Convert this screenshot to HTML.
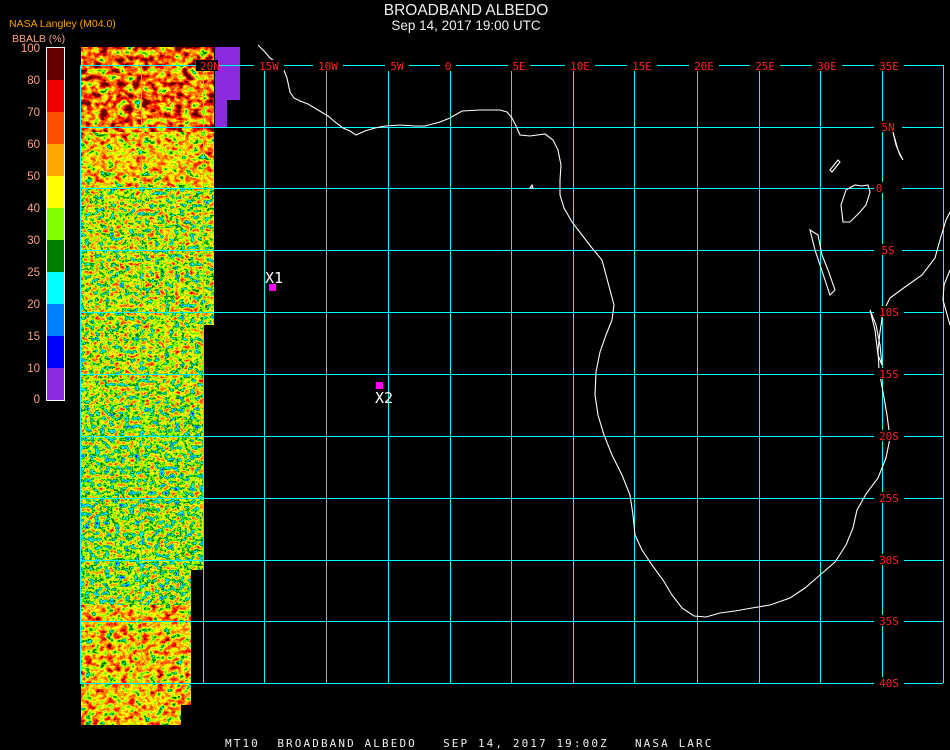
<!DOCTYPE html>
<html><head><meta charset="utf-8"><style>
html,body{margin:0;padding:0;background:#000;width:950px;height:750px;overflow:hidden}
svg{display:block}
.s{font-family:"Liberation Sans",sans-serif}
.m{font-family:"DejaVu Sans Mono","Liberation Mono",monospace}
.l{fill:#ff2020;font-size:11px;font-family:"DejaVu Sans Mono","Liberation Mono",monospace}
</style></head><body>
<svg width="950" height="750" viewBox="0 0 950 750" xmlns="http://www.w3.org/2000/svg" shape-rendering="crispEdges">
<defs>
<filter id="n1" x="0" y="0" width="1" height="1" color-interpolation-filters="sRGB">
<feTurbulence type="fractalNoise" baseFrequency="0.12 0.16" numOctaves="3" seed="3"/>
<feColorMatrix type="matrix" values="1.1 0 0 0 0.19  1.1 0 0 0 0.19  1.1 0 0 0 0.19  0 0 0 0 1"/>
<feComponentTransfer>
<feFuncR type="discrete" tableValues="0.55 0 0 0 0 0.5 1 1 1 1 0.4"/>
<feFuncG type="discrete" tableValues="0.16 0 0.5 1 0.5 1 1 0.65 0.33 0 0"/>
<feFuncB type="discrete" tableValues="0.86 1 1 1 0 0 0 0 0 0 0"/>
</feComponentTransfer>
</filter>
<filter id="n2" x="0" y="0" width="1" height="1" color-interpolation-filters="sRGB">
<feTurbulence type="fractalNoise" baseFrequency="0.14 0.18" numOctaves="3" seed="7"/>
<feColorMatrix type="matrix" values="1.0 0 0 0 0.13  1.0 0 0 0 0.13  1.0 0 0 0 0.13  0 0 0 0 1"/>
<feComponentTransfer>
<feFuncR type="discrete" tableValues="0.55 0 0 0 0 0.5 1 1 1 1 0.4"/>
<feFuncG type="discrete" tableValues="0.16 0 0.5 1 0.5 1 1 0.65 0.33 0 0"/>
<feFuncB type="discrete" tableValues="0.86 1 1 1 0 0 0 0 0 0 0"/>
</feComponentTransfer>
</filter>
<filter id="n3" x="0" y="0" width="1" height="1" color-interpolation-filters="sRGB">
<feTurbulence type="fractalNoise" baseFrequency="0.2 0.24" numOctaves="3" seed="11"/>
<feColorMatrix type="matrix" values="1.0 0 0 0 0.04  1.0 0 0 0 0.04  1.0 0 0 0 0.04  0 0 0 0 1"/>
<feComponentTransfer>
<feFuncR type="discrete" tableValues="0.55 0 0 0 0 0.5 1 1 1 1 0.4"/>
<feFuncG type="discrete" tableValues="0.16 0 0.5 1 0.5 1 1 0.65 0.33 0 0"/>
<feFuncB type="discrete" tableValues="0.86 1 1 1 0 0 0 0 0 0 0"/>
</feComponentTransfer>
</filter>
<filter id="n4" x="0" y="0" width="1" height="1" color-interpolation-filters="sRGB">
<feTurbulence type="fractalNoise" baseFrequency="0.2 0.24" numOctaves="3" seed="5"/>
<feColorMatrix type="matrix" values="1.0 0 0 0 0.0  1.0 0 0 0 0.0  1.0 0 0 0 0.0  0 0 0 0 1"/>
<feComponentTransfer>
<feFuncR type="discrete" tableValues="0.55 0 0 0 0 0.5 1 1 1 1 0.4"/>
<feFuncG type="discrete" tableValues="0.16 0 0.5 1 0.5 1 1 0.65 0.33 0 0"/>
<feFuncB type="discrete" tableValues="0.86 1 1 1 0 0 0 0 0 0 0"/>
</feComponentTransfer>
</filter>
<filter id="n5" x="0" y="0" width="1" height="1" color-interpolation-filters="sRGB">
<feTurbulence type="fractalNoise" baseFrequency="0.14 0.18" numOctaves="3" seed="9"/>
<feColorMatrix type="matrix" values="1.0 0 0 0 0.14  1.0 0 0 0 0.14  1.0 0 0 0 0.14  0 0 0 0 1"/>
<feComponentTransfer>
<feFuncR type="discrete" tableValues="0.55 0 0 0 0 0.5 1 1 1 1 0.4"/>
<feFuncG type="discrete" tableValues="0.16 0 0.5 1 0.5 1 1 0.65 0.33 0 0"/>
<feFuncB type="discrete" tableValues="0.86 1 1 1 0 0 0 0 0 0 0"/>
</feComponentTransfer>
</filter>
</defs>
<rect x="81" y="47" width="133" height="85" fill="#000" filter="url(#n1)"/>
<rect x="81" y="132" width="133" height="55" fill="#000" filter="url(#n2)"/>
<rect x="81" y="187" width="133" height="138" fill="#000" filter="url(#n3)"/>
<rect x="81" y="325" width="122" height="80" fill="#000" filter="url(#n3)"/>
<rect x="81" y="405" width="122" height="165" fill="#000" filter="url(#n4)"/>
<rect x="81" y="570" width="110" height="35" fill="#000" filter="url(#n4)"/>
<rect x="81" y="605" width="110" height="100" fill="#000" filter="url(#n5)"/>
<rect x="81" y="705" width="100" height="20" fill="#000" filter="url(#n5)"/>
<!-- purple block -->
<rect x="215" y="47" width="25" height="53" fill="#8a2be2"/>
<rect x="215" y="100" width="12" height="27" fill="#8a2be2"/>

<!-- grid -->
<g stroke="#00ffff" stroke-width="1" fill="none">
<path d="M80 65.5H943M80 127.5H943M80 188.5H943M80 250.5H943M80 312.5H943M80 374.5H943M80 436.5H943M80 498.5H943M80 560.5H943M80 621.5H943M80 683.5H943"/>
<path d="M80.5 65V683M203.5 65V683M264.5 65V683M388.5 65V683M450.5 65V683M573.5 65V683M634.5 65V683M759.5 65V683M820.5 65V683M882.5 65V683M943.5 65V683"/>
</g>
<g stroke="#aaa" stroke-width="1" fill="none">
<path d="M141.5 65V683M326.5 65V683M511.5 65V683M697.5 65V683"/>
</g>

<!-- coast -->
<g stroke="#fff" stroke-width="1.1" fill="none" shape-rendering="auto">
<path d="M258 45L265 52L270 58L277 63L283 68L287 78L290 92L294 98L300 101L308 104L318 110L328 116L335 122L343 128L350 131L356 135L365 131L375 128L385 126L400 125L415 126L425 126L440 122L450 118L462 111L480 110L500 110L507 112L512 118L516 126L520 135L530 136L545 134L553 140L558 150L561 165L560 180L560 195L564 208L572 222L582 235L592 248L602 260L606 275L610 290L614 305L612 320L606 335L600 352L596 372L595 395L598 415L604 435L612 455L622 475L630 495L633 515L635 535L642 550L652 565L663 580L672 595L682 608L694 616L706 617L720 613L735 611L752 608L770 605L790 598L805 588L820 575L835 562L846 545L853 528L857 510L866 494L878 478L886 458L890 438L887 415L883 392L879 370L878 350L880 332L883 312L890 298L905 287L922 275L935 258L940 240L946 220L950 212"/>
<path d="M830 170L838 160L840 162L832 172Z"/>
<path d="M846 190L855 185L862 186L868 185L870 192L866 205L860 212L850 222L843 222L841 205Z"/>
<path d="M810 230L815 250L820 265L825 280L830 295L835 290L828 270L822 255L818 235Z"/>
<path d="M893 132L896 145L900 155L903 160L898 150Z"/>
<path d="M870 310L875 330L878 355L882 365L880 345L876 325Z"/>
<path d="M950 270L944 285L943 300L948 318L950 325"/>
<path d="M532 185L530 188L533 188Z"/>
</g>

<!-- top labels -->
<g fill="#000">
<rect x="196" y="60" width="22" height="11"/>
<rect x="254" y="60" width="30" height="11"/>
<rect x="313" y="60" width="30" height="11"/>
<rect x="385" y="60" width="24" height="11"/>
<rect x="440" y="60" width="16" height="11"/>
<rect x="508" y="60" width="22" height="11"/>
<rect x="565" y="60" width="30" height="11"/>
<rect x="627" y="60" width="30" height="11"/>
<rect x="689" y="60" width="30" height="11"/>
<rect x="750" y="60" width="30" height="11"/>
<rect x="812" y="60" width="30" height="11"/>
<rect x="874" y="60" width="30" height="11"/>
</g>
<text x="200" y="70" class="l">20N</text>
<g class="l" text-anchor="middle">
<text x="269" y="70">15W</text><text x="328" y="70">10W</text><text x="397" y="70">5W</text>
<text x="448" y="70">0</text><text x="519" y="70">5E</text><text x="580" y="70">10E</text>
<text x="642" y="70">15E</text><text x="704" y="70">20E</text><text x="765" y="70">25E</text>
<text x="827" y="70">30E</text><text x="889" y="70">35E</text>
</g>
<!-- right labels -->
<g fill="#000">
<rect x="874" y="121" width="28" height="11"/><rect x="874" y="182" width="28" height="11"/>
<rect x="874" y="244" width="28" height="11"/><rect x="874" y="306" width="30" height="11"/>
<rect x="874" y="368" width="30" height="11"/><rect x="874" y="430" width="30" height="11"/>
<rect x="874" y="492" width="30" height="11"/><rect x="874" y="554" width="30" height="11"/>
<rect x="874" y="615" width="30" height="11"/><rect x="874" y="677" width="30" height="11"/>
</g>
<g class="l" text-anchor="middle">
<text x="888" y="131">5N</text><text x="879" y="192">0</text><text x="888" y="254">5S</text>
<text x="889" y="316">10S</text><text x="889" y="378">15S</text><text x="889" y="440">20S</text>
<text x="889" y="502">25S</text><text x="889" y="564">30S</text><text x="889" y="625">35S</text>
<text x="889" y="687">40S</text>
</g>

<!-- markers -->
<rect x="269" y="284" width="7" height="7" fill="#ff00ff"/>
<text x="265" y="283" fill="#fff" class="m" style="font-size:15px">X1</text>
<rect x="376" y="382" width="7" height="7" fill="#ff00ff"/>
<text x="375" y="403" fill="#fff" class="m" style="font-size:15px">X2</text>

<!-- titles -->
<text x="466" y="15" fill="#eee" class="s" style="font-size:15.5px" text-anchor="middle">BROADBAND ALBEDO</text>
<text x="466" y="30" fill="#eee" class="s" style="font-size:13.5px" text-anchor="middle">Sep 14, 2017 19:00 UTC</text>
<text x="225" y="747" fill="#eee" class="m" style="font-size:11px;letter-spacing:2.1px;white-space:pre">MT10  BROADBAND ALBEDO   SEP 14, 2017 19:00Z   NASA LARC</text>

<!-- legend -->
<text x="9" y="27" fill="#ffa000" class="s" style="font-size:10.5px">NASA Langley (M04.0)</text>
<text x="12" y="42" fill="#ffa080" class="s" style="font-size:10.5px">BBALB (%)</text>
<g>
<rect x="47" y="48" width="17" height="32" fill="#640000"/>
<rect x="47" y="80" width="17" height="32" fill="#f00000"/>
<rect x="47" y="112" width="17" height="32" fill="#ff5000"/>
<rect x="47" y="144" width="17" height="32" fill="#ffa500"/>
<rect x="47" y="176" width="17" height="32" fill="#ffff00"/>
<rect x="47" y="208" width="17" height="32" fill="#80ff00"/>
<rect x="47" y="240" width="17" height="32" fill="#008000"/>
<rect x="47" y="272" width="17" height="32" fill="#00ffff"/>
<rect x="47" y="304" width="17" height="32" fill="#0080ff"/>
<rect x="47" y="336" width="17" height="32" fill="#0000ff"/>
<rect x="47" y="368" width="17" height="32" fill="#8a2be2"/>
<rect x="46.5" y="47.5" width="18" height="353" fill="none" stroke="#fff" stroke-width="1"/>
</g>
<g fill="#ffa080" class="s" style="font-size:11.5px" text-anchor="end">
<text x="40" y="52">100</text><text x="40" y="84">80</text><text x="40" y="116">70</text>
<text x="40" y="148">60</text><text x="40" y="180">50</text><text x="40" y="212">40</text>
<text x="40" y="244">30</text><text x="40" y="276">25</text><text x="40" y="308">20</text>
<text x="40" y="340">15</text><text x="40" y="372">10</text><text x="40" y="403">0</text>
</g>
</svg>
</body></html>
